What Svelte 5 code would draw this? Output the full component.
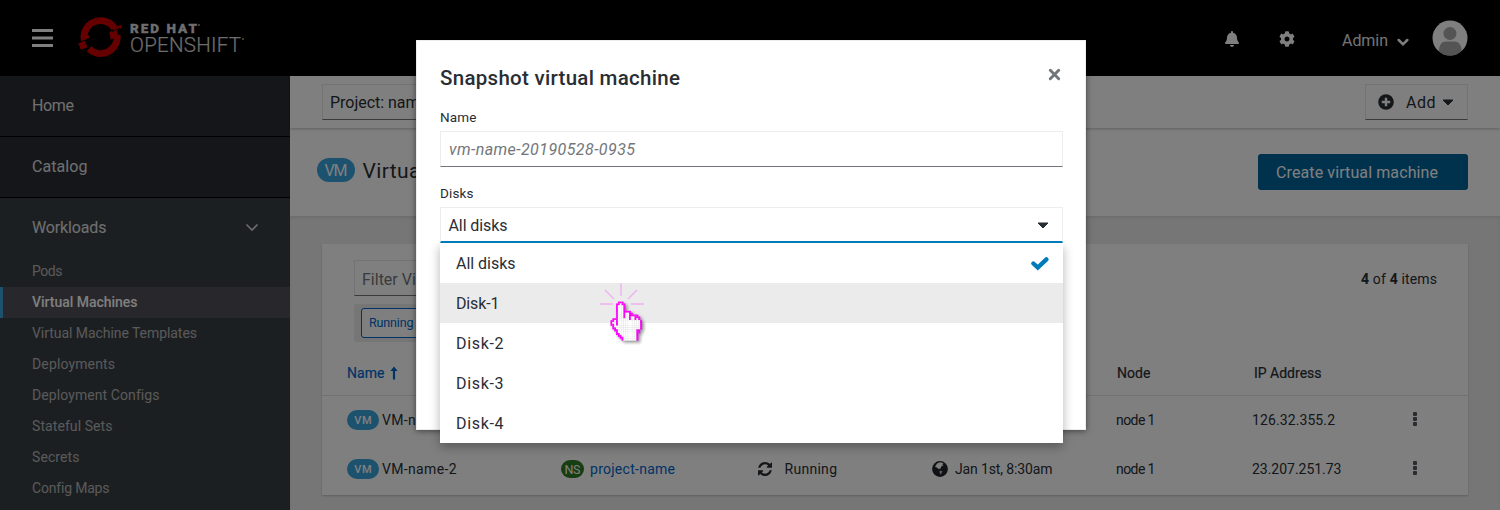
<script>
  const subnav = [
    ['Pods', 30.5], ['Virtual Machines', 105.5], ['Virtual Machine Templates', 165],
    ['Deployments', 83], ['Deployment Configs', 127], ['Stateful Sets', 80.5],
    ['Secrets', 47.5], ['Config Maps', 77]
  ];
  const rows = [
    { name: 'VM-name-1', node: 'node 1', ip: '126.32.355.2', w: 83 },
    { name: 'VM-name-2', node: 'node 1', ip: '23.207.251.73', w: 89.5 }
  ];
  const disks = [['All disks', 59.5], ['Disk-1', 43.5], ['Disk-2', 47.5], ['Disk-3', 47.5], ['Disk-4', 47.5]];

  // Pointer bitmap: X is outline, o is fill
  const hand = [
    '....XXX..........',
    '...XXoXX.........',
    '...XoooX.........',
    '...XoooX.........',
    '...XoooX.........',
    '...XoooXXXX......',
    '...XoooXooXX.....',
    '...XoooXooXXXXX..',
    '...XoooXooXooXXX.',
    '.XXXooooooXooXoX.',
    'XXoXooooooooooooX',
    'XooXooooooooooooX',
    'XXoXooooooooooooX',
    '.XooooooooooooooX',
    '.XXoooooooooooooX',
    '..XXooooooooooXX.',
    '...XooooooooooXX.',
    '...XXoooooooooX..',
    '....XXooooooooX..',
    '.....XXoooooooX..',
    '......XoooooooX..'
  ];
  const pixels = hand.flatMap((line, y) =>
    [...line].map((c, x) => ({ c, x, y })).filter((p) => p.c !== '.'));

  // Tracks a label out so that it fills the given width
  function fit(node, width) {
    const natural = node.getBoundingClientRect().width;
    const gap = (width - natural) / (node.textContent.length - 1);
    node.style.letterSpacing = `${gap}px`;
    node.style.marginRight = `${-gap}px`;
  }
</script>

<div class="page">
  <header>
    <svg class="burger" viewBox="0 0 21 18"><path d="M0 1.5h21M0 9h21M0 16.5h21" stroke="#fff" stroke-width="3" /></svg>
    <svg class="logo" viewBox="0 0 44 42">
      <g fill="none" stroke="#cc0000" stroke-width="6.8">
        <path d="M5.900 21.500A16.600 16.600 0 0 1 36.300 12" />
        <path d="M39.100 19A16.600 16.600 0 0 1 11 32.800" />
      </g>
      <path fill="#c00" d="M31.300 16l7.400-2.500 1.200 7.800-7.200 2.300zM34.700 12.500l9-4-.8 3.700-7.600 3.400zM.3 27L7 24.300l2.300 7-6.500 2.500zM2.600 21l8.800-2-.6 3.500-7.800 3z" />
      <path d="M1 26.800l10-4.200M34 15.600l8-3.400" stroke="#000" stroke-width=".8" />
    </svg>
    <div class="brand"><b><span use:fit={67}>RED HAT</span><i></i></b><span class="os"><span use:fit={111}>OPENSHIFT</span><i></i></span></div>
    <svg class="bell" viewBox="0 0 448 512"><path fill="#fff" d="M224 512c35.32 0 63.97-28.65 63.97-64H160.03c0 35.35 28.65 64 63.97 64zm215.39-149.71c-19.32-20.76-55.47-51.99-55.47-154.29 0-77.7-54.48-139.9-127.94-155.16V32c0-17.67-14.32-32-31.98-32s-31.98 14.33-31.98 32v20.84C118.56 68.1 64.08 130.3 64.08 208c0 102.3-36.15 133.53-55.47 154.29-6 6.45-8.66 14.16-8.61 21.71.11 16.4 12.98 32 32.1 32h383.8c19.12 0 32-15.6 32.1-32 .05-7.55-2.61-15.27-8.61-21.71z" /></svg>
    <svg class="cog" viewBox="0 0 512 512"><path fill="#fff" d="M487.4 315.7l-42.6-24.6c4.3-23.2 4.3-47 0-70.2l42.6-24.6c4.900-2.800 7.100-8.600 5.500-14-11.100-35.600-30-67.800-54.700-94.600-3.800-4.100-10-5.100-14.800-2.300L380.800 110c-17.900-15.400-38.500-27.300-60.800-35.100V25.800c0-5.600-3.900-10.500-9.400-11.700-36.700-8.200-74.300-7.800-109.200 0-5.500 1.200-9.400 6.100-9.400 11.700V75c-22.200 7.900-42.800 19.800-60.800 35.100L88.700 85.500c-4.900-2.800-11-1.900-14.800 2.300-24.700 26.700-43.600 58.900-54.700 94.600-1.700 5.400.6 11.200 5.500 14L67.300 221c-4.300 23.200-4.300 47 0 70.200l-42.6 24.600c-4.900 2.800-7.100 8.600-5.500 14 11.100 35.600 30 67.800 54.700 94.600 3.800 4.100 10 5.100 14.800 2.300l42.600-24.600c17.900 15.400 38.500 27.300 60.800 35.100v49.200c0 5.600 3.900 10.500 9.400 11.700 36.700 8.200 74.300 7.800 109.200 0 5.500-1.200 9.400-6.100 9.400-11.700v-49.200c22.200-7.900 42.800-19.800 60.800-35.100l42.600 24.600c4.900 2.800 11 1.900 14.800-2.300 24.700-26.700 43.600-58.900 54.700-94.600 1.500-5.500-.7-11.300-5.600-14.100zM256 336c-44.100 0-80-35.900-80-80s35.900-80 80-80 80 35.900 80 80-35.900 80-80 80z" /></svg>
    <div class="admin"><span use:fit={46}>Admin</span></div>
    <svg class="down" viewBox="0 0 12 9"><path d="M1.700 2l4.300 4.300L10.300 2" fill="none" stroke="#fff" stroke-width="2.500" stroke-linecap="round" /></svg>
    <svg class="avatar" viewBox="0 0 36 36">
      <clipPath id="disc"><circle cx="18" cy="18" r="17.500" /></clipPath>
      <g clip-path="url(#disc)">
        <rect width="36" height="36" fill="#fff" />
        <path d="M6.500 36c0-10 2-14.500 8-14.500h7.500c6 0 8 4.500 8 14.500z" fill="#a8a8a8" />
        <path d="M11 30l.8 6h12.800l.8-6v7H11z" fill="#969696" />
        <circle cx="18" cy="13.500" r="6.500" fill="#a8a8a8" />
        <path d="M13 9a6.500 6.500 0 0 0 0 9a8 8 0 0 1 0-9" fill="#bbb" />
      </g>
    </svg>
  </header>

  <div class="body">
    <nav>
      <div class="item"><span use:fit={42}>Home</span></div>
      <div class="item"><span use:fit={55.5}>Catalog</span></div>
      <div class="group">
        <div class="head"><span use:fit={74.5}>Workloads</span>
          <svg width="14" height="9" viewBox="0 0 14 9"><path d="M1.500 1.500L7 7l5.500-5.500" fill="none" stroke="#d6d6d6" stroke-width="1.600" /></svg>
        </div>
        {#each subnav as [label, w], i}
          <div class="sub" class:active={i === 1}><span use:fit={w}>{label}</span></div>
        {/each}
      </div>
    </nav>

    <main>
      <div class="bar">
        <div class="box project"><span use:fit={98}>Project: name</span></div>
        <div class="box add">
          <svg width="16" height="16" viewBox="0 0 16 16"><circle cx="8" cy="8" r="7.800" fill="#292e34" /><path d="M8 3.800v8.400M3.800 8h8.400" stroke="#fff" stroke-width="2.400" /></svg>
          <span use:fit={29.5}>Add</span>
          <svg width="12" height="7" viewBox="0 0 12 7"><path d="M1 1h10L6 6z" fill="#292e34" stroke="#292e34" stroke-linejoin="round" /></svg>
        </div>
      </div>
      <div class="title">
        <div class="vm big"><span use:fit={23}>VM</span></div>
        <h1><span use:fit={163}>Virtual Machines</span></h1>
        <div class="create"><span use:fit={162}>Create virtual machine</span></div>
      </div>
      <div class="content">
        <section>
          <div class="tools">
            <div class="box filter">Filter Virtual Machines</div>
            <div class="count"><span use:fit={76}><b>4</b> of <b>4</b> items</span></div>
          </div>
          <div class="chips"><div class="chip"><span use:fit={44.5}>Running</span></div></div>
          <div class="grid thead">
            <div class="blue name"><span use:fit={37.5}>Name</span>
              <svg width="8" height="14" viewBox="0 0 8 14"><path d="M4 13.500V3" fill="none" stroke="#06c" stroke-width="2.200" /><path d="M4 .5l3.600 4.500H.4z" fill="#06c" /></svg>
            </div>
            <div></div><div></div><div></div>
            <div class="shift"><span use:fit={33.5}>Node</span></div>
            <div class="shift ip"><span use:fit={67.5}>IP Address</span></div>
          </div>
          {#each rows as row}
            <div class="grid row">
              <div class="cell"><div class="vm"><span use:fit={17.5}>VM</span></div><span class="vmname" use:fit={74.5}>{row.name}</span></div>
              <div class="cell ns"><div class="badge"><span use:fit={16}>NS</span></div><span use:fit={85}>project-name</span></div>
              <div class="cell status">
                <svg width="14" height="14" viewBox="0 0 1536 1536"><path fill="#292e34" d="M1511 928q0 5-1 7-64 268-268 434.500T764 1536q-146 0-282.500-55T238 1324l-129 129q-19 19-45 19t-45-19-19-45V960q0-26 19-45t45-19h448q26 0 45 19t19 45-19 45l-137 137q71 66 161 102t187 36q134 0 250-65t186-179q11-17 53-117 8-23 30-23h192q13 0 22.500 9.500t9.500 22.500zm25-800v448q0 26-19 45t-45 19h-448q-26 0-45-19t-19-45 19-45l138-138Q969 256 768 256q-134 0-250 65T332 500q-11 17-53 117-8 23-30 23H50q-13 0-22.500-9.500T18 608v-7q65-268 270-434.500T768 0q146 0 284 55.500T1297 212l130-129q19-19 45-19t45 19 19 45z" /></svg>
                <span use:fit={52.5}>Running</span>
              </div>
              <div class="cell">
                <svg width="16" height="16" viewBox="0 0 16 16"><circle cx="8" cy="8" r="7.900" fill="#20242c" /><path d="M5 2.500l3-1.200 3.500.6-1.200 1.300 1.200 1-2.300 1.400-.6 2-2 .4-1.800-1.600L3 5.800z" fill="#fff" /><path d="M7.500 9.500l3 .8-1 2-1.200 1.200-.6-2z" fill="#bbb" /></svg>
                <span class="date" use:fit={97.500}>Jan 1st, 8:30am</span>
              </div>
              <div><span use:fit={39.5}>{row.node}</span></div>
              <div><span use:fit={row.w}>{row.ip}</span></div>
              <svg class="kebab" width="6" height="16" viewBox="0 0 6 16" fill="#555961"><rect x="1" y="1" width="4" height="4" rx="1" /><rect x="1" y="6" width="4" height="4" rx="1" /><rect x="1" y="11" width="4" height="4" rx="1" /></svg>
            </div>
          {/each}
        </section>
      </div>
    </main>
  </div>

  <div class="overlay"></div>

  <div class="modal">
    <div class="mhead">
      <h2><span use:fit={240}>Snapshot virtual machine</span></h2>
      <svg width="13" height="13" viewBox="0 0 13 13"><path d="M2.300 2.300l8.400 8.400M10.700 2.300l-8.400 8.400" stroke="#72767b" stroke-width="3" stroke-linecap="round" /></svg>
    </div>
    <div class="label"><span use:fit={36.5}>Name</span></div>
    <div class="input"><span use:fit={186}>vm-name-20190528-0935</span></div>
    <div class="label second"><span use:fit={33.5}>Disks</span></div>
    <div class="select"><span use:fit={59}>All disks</span>
      <svg width="12" height="7" viewBox="0 0 12 7"><path d="M1 1h10L6 6z" fill="#292e34" stroke="#292e34" stroke-linejoin="round" /></svg>
    </div>
    <div class="menu">
      {#each disks as [label, w], i}
        <div class="option" class:hover={i === 1}><span use:fit={w}>{label}</span>
          {#if i === 0}
            <svg width="18" height="14" viewBox="0 0 18 14"><path d="M2.400 6.500l4.400 4L15.400 2.400" fill="none" stroke="#007bba" stroke-width="4.300" stroke-linecap="round" /></svg>
          {/if}
        </div>
      {/each}
    </div>
  </div>

  <svg class="cursor" width="60" height="70" viewBox="0 0 60 70">
    <path d="M21 .5v12.500M5 7l9 9M37 7l-9 9M0 21h13M31 21h13" fill="none" stroke="#f0b0f0" stroke-width="1.400" />
    <g class="hand" transform="translate(10.500 18.600) scale(1.850)">
      {#each pixels as p}
        <rect x={p.x} y={p.y} width="1.080" height="1.080" fill={p.c === 'X' ? '#f0f' : '#fff'} />
      {/each}
    </g>
  </svg>
</div>

<style>
  :global(body) { margin: 0; }
  * { box-sizing: border-box; }
  svg { display: block; flex: none; }
  span { white-space: nowrap; }
  .page { position: relative; width: 1500px; height: 510px; overflow: hidden; display: flex; flex-direction: column; font-family: Roboto, sans-serif; font-size: 16px; color: #292e34; }
  header { height: 76px; flex: none; background: #000; display: flex; align-items: flex-start; padding-left: 32px; color: #fff; }
  .burger { width: 21px; height: 18px; margin-top: 29px; }
  .logo { width: 44px; height: 42px; margin: 16px 0 0 25px; }
  .brand { width: 120px; margin: 20.500px 0 0 8px; color: #ddd; display: flex; flex-direction: column; }
  .brand b { font-size: 13.500px; line-height: 14px; font-weight: 900; height: 14px; display: flex; -webkit-text-stroke: .3px #ddd; }
  .brand .os { font-size: 20.500px; line-height: 20px; font-weight: 300; display: flex; -webkit-text-stroke: .2px #ddd; }
  .brand i { width: 2px; height: 2px; border-radius: 1px; background: #999; margin: 3px 0 0 1px; }
  .bell { width: 14px; height: 16px; margin: 31px 0 0 975px; }
  .cog { width: 16px; height: 16px; margin: 31px 0 0 40px; }
  .admin { width: 47px; line-height: 24px; margin: 29px 0 0 47px; color: #e6e6e6; }
  .down { width: 12px; height: 9px; margin: 37.500px 0 0 7.500px; }
  .avatar { width: 36px; height: 36px; margin: 20px 0 0 23.500px; }
  .body { display: flex; flex: 1; min-height: 0; }
  nav { width: 290px; flex: none; background: #292c33; color: #e0e0e0; }
  .item { height: 61px; border-bottom: 1px solid #000; padding-left: 32px; line-height: 59px; }
  .group { background: #393f44; height: 330px; }
  .head { display: flex; align-items: center; justify-content: space-between; height: 58px; padding: 1px 31px 0 32px; }
  .sub { height: 31px; line-height: 31px; padding-left: 32px; font-size: 14px; color: #b4b4b4; }
  .active { background: #505058; color: #fff; font-weight: 500; border-left: 3px solid #39a5dc; padding-left: 29px; }
  main { flex: 1; background: #fff; display: flex; flex-direction: column; }
  .bar { height: 52px; flex: none; display: flex; justify-content: space-between; padding: 8px 32px; box-shadow: 0 1px 3px rgba(0,0,0,.25); }
  .box { height: 36px; border: 1px solid #e6e6e6; border-bottom-color: #72767b; padding-left: 7px; line-height: 37px; }
  .project { width: 200px; line-height: 36px; }
  .add { width: 103px; display: flex; align-items: center; padding-left: 12px; }
  .add span { margin-left: 12px; }
  .add svg:last-child { margin-left: 6px; }
  .title { height: 88px; flex: none; display: flex; align-items: flex-start; padding: 26px 32px 0 27px; }
  .vm { background: #39a5dc; color: #fff; border-radius: 12px; width: 32px; height: 20px; font-size: 11px; font-weight: 500; line-height: 21px; text-align: center; }
  .vm.big { width: 38px; height: 24px; font-size: 16px; font-weight: 400; line-height: 25px; margin-top: 4px; }
  h1 { margin: 0 0 0 7.500px; font-size: 21px; font-weight: 400; line-height: 34px; }
  .create { margin-left: auto; width: 210px; height: 36px; border-radius: 3px; background: #00659c; color: #fff; padding-left: 18px; line-height: 37px; }
  .content { flex: 1; background: #ededed; padding: 28px 32px 0; box-shadow: inset 0 2px 3px rgba(0,0,0,.08); }
  section { height: 251px; background: #fff; box-shadow: 0 1px 2px rgba(0,0,0,.2); padding-top: 16px; }
  .tools { display: flex; justify-content: space-between; padding: 0 31px 0 32px; height: 44px; }
  .filter { width: 250px; color: #72767b; }
  .count { font-size: 14px; line-height: 38px; }
  .count b { font-weight: 700; }
  .chips { margin-left: 32px; width: 150px; height: 38px; background: #ededed; border-radius: 3px; padding: 4px 7px; }
  .chip { width: 90px; height: 30px; border: 1px solid #06c; border-radius: 3px; color: #06c; font-size: 12.500px; line-height: 28px; padding-left: 7px; background: #fff; }
  .grid { display: grid; grid-template-columns: 214px 196px 175px 184px 136px 160px 6px; padding-left: 25px; align-items: center; font-size: 14px; }
  .thead { height: 54px; border-bottom: 1px solid #e4e4e4; padding-top: 9px; -webkit-text-stroke: .2px; }
  .name { display: flex; align-items: center; gap: 5px; }
  .blue { color: #06c; }
  .shift { padding-left: 1px; }
  .ip { padding-left: 2px; }
  .row { height: 49.500px; padding-bottom: 2px; }
  .kebab { margin-top: -2px; }
  .cell { display: flex; align-items: center; gap: 4px; }
  .cell .vmname { margin-left: -1px; }
  .ns { color: #06c; gap: 6px; }
  .badge { width: 23px; height: 18px; border-radius: 9px; background: #2f7d24; color: #fff; font-size: 12.500px; line-height: 19px; text-align: center; }
  .status { gap: 12.500px; padding-left: 1px; }
  .cell .date { margin-left: 3px; }
  .overlay { position: absolute; inset: 0; background: rgba(0,0,0,.5); }
  .modal { position: absolute; left: 416px; top: 40px; width: 670px; height: 390px; background: #fff; border: 1px solid #ededed; box-shadow: 0 1px 6px rgba(0,0,0,.5); padding: 20px 22px 0 23px; }
  .mhead { display: flex; justify-content: space-between; height: 46px; }
  .mhead svg { margin: 7px 2px 0 0; }
  h2 { margin: 0; font-size: 20.500px; font-weight: 500; line-height: 35px; }
  .label { font-size: 13.500px; line-height: 20px; height: 24px; }
  .second { margin-top: 16px; }
  .input { height: 36px; border: 1px solid #ededed; border-bottom-color: #72767b; font-style: italic; color: #72767b; padding-left: 8px; line-height: 36px; }
  .select { height: 36px; border: 1px solid #ededed; border-bottom: 2px solid #007bba; display: flex; align-items: center; justify-content: space-between; padding: 2px 13px 0 7.500px; }
  .menu { height: 200px; background: #fff; box-shadow: 0 4px 10px rgba(0,0,0,.3); clip-path: inset(0 -20px -20px -20px); }
  .option { height: 40px; padding: 1px 14px 0 16px; display: flex; align-items: center; justify-content: space-between; }
  .hover { background: #ebebeb; }
  .cursor { position: absolute; left: 600px; top: 283px; }
  .hand { filter: drop-shadow(1px 1px 1px rgba(0,0,0,.45)); }
</style>
